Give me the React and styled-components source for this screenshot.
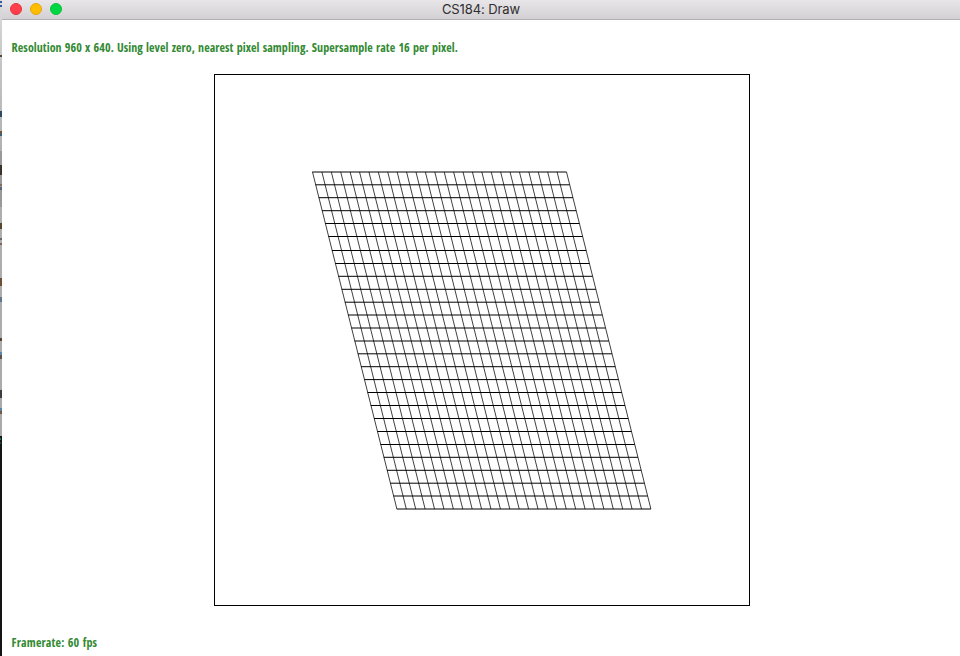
import React from "react";
import styled, { createGlobalStyle } from "styled-components";

const GlobalStyle = createGlobalStyle`
  * { box-sizing: border-box; }
  body { margin: 0; background: #fff; overflow: hidden; }
`;

const Screen = styled.div`
  display: grid;
  grid-template-columns: 2px 1fr;
  width: 960px;
  height: 656px;
`;

const Backdrop = styled.svg`
  display: block;
  width: 2px;
  height: 656px;
`;

const Window = styled.main`
  display: flex;
  flex-direction: column;
  min-width: 0;
  background: #fff;
`;

const TitleBar = styled.header`
  display: grid;
  grid-template-columns: 1fr auto 1fr;
  align-items: center;
  height: 20px;
  padding: 0 8px 1px;
  background: linear-gradient(#e8e6e8, #d2d0d2);
  border-bottom: 1px solid #b3b0b3;
`;

const Lights = styled.div`
  display: flex;
  gap: 8px;
`;

const Light = styled.i`
  width: 12px;
  height: 12px;
  border-radius: 50%;
  background: ${(p) => p.$fill};
  border: 1px solid ${(p) => p.$edge};
`;

const Title = styled.h1`
  margin: 0;
  font: 400 13px/16px Inter, sans-serif;
  letter-spacing: -0.1px;
  color: #302e30;
`;

const Canvas = styled.section`
  flex: 1;
  display: flex;
  flex-direction: column;
`;

const Status = styled.p`
  margin: 0;
  padding: ${(p) => p.$pad};
  font: 700 12px/16px "Open Sans", sans-serif;
  font-stretch: 75%;
  letter-spacing: ${(p) => p.$tracking};
  word-spacing: 1px;
  white-space: nowrap;
  color: #338a33;
`;

const Frame = styled.div`
  width: 536px;
  height: 532px;
  margin: 18px 0 0 212px;
  border: 1px solid #000;
`;

const Drawing = styled.svg`
  display: block;
  width: 534px;
  height: 530px;
`;

const ROWS = [
  172, 184.8, 197.7, 210.7, 223.5, 236.5, 250.5, 263.5, 276.3, 289.3, 302.2, 315, 328, 341,
  353.8, 366.7, 379.6, 392.5, 405.5, 418.5, 431.5, 444.5, 457.3, 470.3, 483.2, 496, 509,
];
const COLS = 27;
const cols = Array.from({ length: COLS + 1 }, (_, i) => i / COLS);

function Grid() {
  return (
    <Drawing viewBox="215 75 534 530">
      <g stroke="#000" strokeWidth="1">
        {ROWS.map((y) => {
          const shift = ((y - 172) / 337) * 84.4;
          return <line key={y} x1={312.3 + shift} x2={566.5 + shift} y1={y} y2={y} />;
        })}
      </g>
      <g stroke="#000" strokeWidth="0.75">
        {cols.map((t) => (
          <line key={t} x1={312.5 + 254 * t} x2={396.9 + 254 * t} y1="172" y2="509" />
        ))}
      </g>
    </Drawing>
  );
}

const MARKS = [
  [1, 2, "#3d5aa0"],
  [5, 2, "#3d5aa0"],
  [55, 2, "#5b4634"],
  [111, 6, "#2d4860"],
  [131, 4, "#6b5540"],
  [134, 2, "#2c6288"],
  [165, 10, "#3a3128"],
  [184, 2, "#806b5c"],
  [187, 3, "#56657a"],
  [223, 6, "#56462c"],
  [238, 2, "#68686c"],
  [243, 2, "#796458"],
  [278, 8, "#6d5036"],
  [297, 5, "#62768a"],
  [338, 3, "#54412e"],
  [352, 3, "#5a86ad"],
  [355, 4, "#5f5048"],
  [390, 8, "#3b3c42"],
  [408, 3, "#5683a8"],
  [411, 3, "#705a48"],
];

export default function App() {
  return (
    <>
      <GlobalStyle />
      <Screen>
        <Backdrop viewBox="0 0 2 656">
          <defs>
            <linearGradient id="desk" x1="0" y1="0" x2="0" y2="1">
              <stop offset="0" stopColor="#dcdcdc" />
              <stop offset="0.15" stopColor="#c4c4c4" />
              <stop offset="0.35" stopColor="#b0b0b0" />
              <stop offset="1" stopColor="#a9a9a9" />
            </linearGradient>
          </defs>
          <rect width="2" height="436" fill="url(#desk)" />
          <rect y="151" width="2" height="56" fill="#999" />
          {MARKS.map(([y, h, fill]) => (
            <rect key={y} y={y} width="2" height={h} fill={fill} />
          ))}
          <rect y="436" width="2" height="220" fill="#141414" />
          <rect y="438" width="1" height="2" fill="#167a5c" />
          <rect y="442" width="1" height="2" fill="#164d2c" />
        </Backdrop>
        <Window>
          <TitleBar>
            <Lights>
              <Light $fill="#ff3f4b" $edge="#e8323c" />
              <Light $fill="#ffbd00" $edge="#e5a50d" />
              <Light $fill="#00d742" $edge="#0fbf3b" />
            </Lights>
            <Title>CS184: Draw</Title>
          </TitleBar>
          <Canvas>
            <Status $pad="20px 0 0 9.6px" $tracking="0.055px">
              Resolution 960 x 640. Using level zero, nearest pixel sampling. Supersample rate 16 per pixel.
            </Status>
            <Frame>
              <Grid />
            </Frame>
            <Status $pad="29px 0 0 9.6px" $tracking="0.16px">
              Framerate: 60 fps
            </Status>
          </Canvas>
        </Window>
      </Screen>
    </>
  );
}
